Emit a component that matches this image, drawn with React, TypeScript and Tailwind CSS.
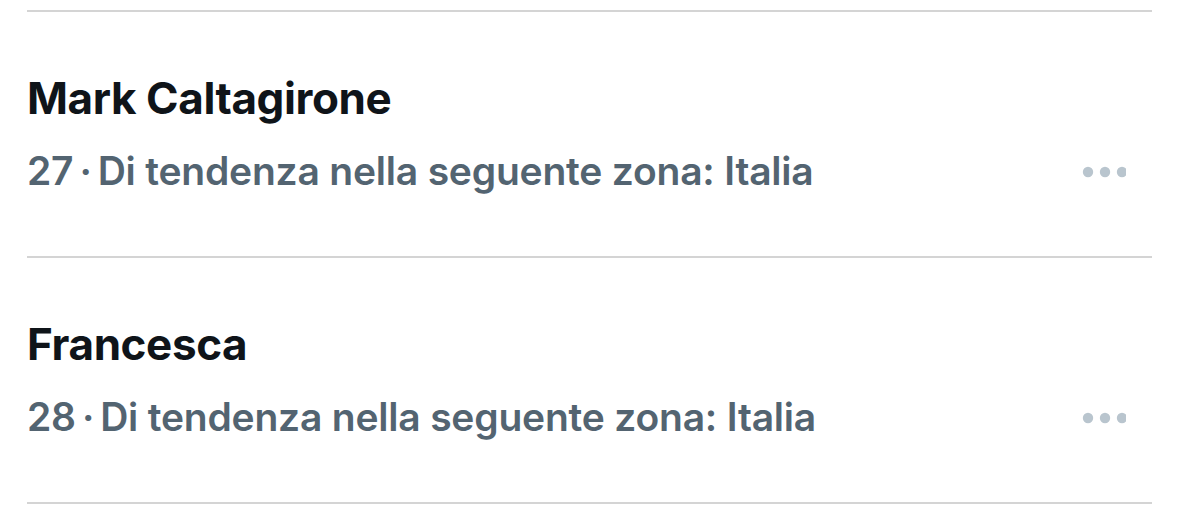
import React from "react";

const rows = [
  { name: "Mark Caltagirone", rank: "27" },
  { name: "Francesca", rank: "28" },
];

function Dots() {
  return (
    <svg width="44" height="12" viewBox="0 0 44 12" className="shrink-0">
      <circle cx="6" cy="6" r="5.2" fill="#b9c5ce" />
      <circle cx="23" cy="6" r="5.2" fill="#b9c5ce" />
      <circle cx="40" cy="6" r="5.2" fill="#b9c5ce" />
    </svg>
  );
}

export default function App() {
  return (
    <div
      className="w-[1179px] h-[505px] bg-white overflow-hidden pt-[10px]"
      style={{ fontFamily: "Inter, 'Noto Sans', sans-serif" }}
    >
      <div className="ml-[27px] w-[1125px] border-t-2 border-[#d4d4d4]">
        {rows.map((r) => (
          <div key={r.rank} className="h-[246px] border-b-2 border-[#d4d4d4] pt-[60px]">
            <div className="text-[44px] leading-[52px] font-bold text-[#0f1419] tracking-[-0.4px]">
              {r.name}
            </div>
            <div className="flex items-center justify-between mt-[23px]">
              <div className="text-[39px] leading-[48px] font-semibold text-[#536471] tracking-[-0.2px]">
                {r.rank}
                <span className="mx-[6px]">·</span>
                Di tendenza nella seguente zona: Italia
              </div>
              <div className="mr-[26px] mt-[2px]">
                <Dots />
              </div>
            </div>
          </div>
        ))}
      </div>
    </div>
  );
}
